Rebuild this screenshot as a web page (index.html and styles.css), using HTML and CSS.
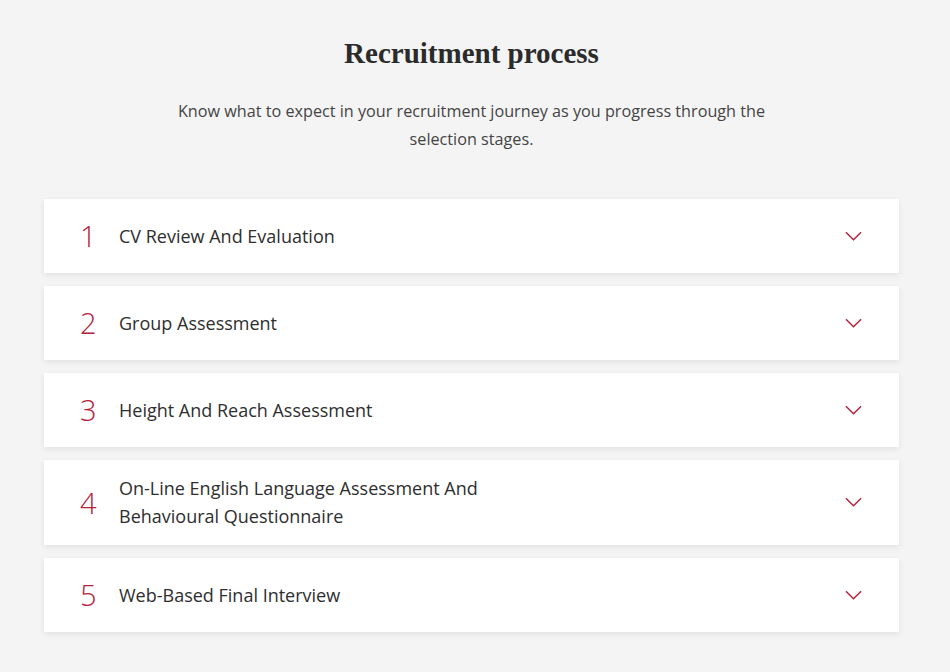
FILE: index.html
```html
<!DOCTYPE html>
<html lang="en">
<head>
  <meta charset="UTF-8" />
  <meta name="viewport" content="width=device-width, initial-scale=1.0"/>
  <title>Recruitment process</title>
  <link rel="stylesheet" href="styles.css">
</head>
<body>
  <section class="process">
    <h2>Recruitment process</h2>
    <p class="intro">Know what to expect in your recruitment journey as you progress through the selection stages.</p>

    <div class="steps">
      <div class="step">
        <span class="step-num">1</span>
        <div class="step-title"><span>CV Review And Evaluation</span></div>
        <svg class="chevron" viewBox="0 0 18 10" width="17" height="10"><path d="M1 1l8 8 8-8" /></svg>
      </div>
      <div class="step">
        <span class="step-num">2</span>
        <div class="step-title"><span>Group Assessment</span></div>
        <svg class="chevron" viewBox="0 0 18 10" width="17" height="10"><path d="M1 1l8 8 8-8" /></svg>
      </div>
      <div class="step">
        <span class="step-num">3</span>
        <div class="step-title"><span>Height And Reach Assessment</span></div>
        <svg class="chevron" viewBox="0 0 18 10" width="17" height="10"><path d="M1 1l8 8 8-8" /></svg>
      </div>
      <div class="step">
        <span class="step-num">4</span>
        <div class="step-title"><span>On-Line English Language Assessment And Behavioural Questionnaire</span></div>
        <svg class="chevron" viewBox="0 0 18 10" width="17" height="10"><path d="M1 1l8 8 8-8" /></svg>
      </div>
      <div class="step">
        <span class="step-num">5</span>
        <div class="step-title"><span>Web-Based Final Interview</span></div>
        <svg class="chevron" viewBox="0 0 18 10" width="17" height="10"><path d="M1 1l8 8 8-8" /></svg>
      </div>
    </div>
  </section>
</body>
</html>
```

FILE: styles.css
```css
body {
  font-family: "Open Sans", "Liberation Sans", sans-serif;
  background-color: #f4f4f4;
  margin: 0;
  color: #333;
}

.process {
  padding: 34px 51px 40px 44px;
}

h2 {
  font-family: "Liberation Serif", serif;
  font-weight: bold;
  font-size: 29px;
  text-align: center;
  color: #2b2b2b;
  margin: 0;
  line-height: 38px;
}

.intro {
  max-width: 610px;
  margin: 25px auto 0 auto;
  text-align: center;
  font-size: 16.2px;
  line-height: 28px;
  color: #444;
  font-weight: 400;
}

.steps {
  margin-top: 46px;
  display: flex;
  flex-direction: column;
  gap: 13px;
}

.step {
  display: flex;
  align-items: center;
  min-height: 74px;
  box-sizing: border-box;
  padding: 14px 37px 15px 36px;
  background-color: #ffffff;
  box-shadow: 0 2px 6px rgba(0, 0, 0, 0.08);
}

.step-num {
  width: 39px;
  flex-shrink: 0;
  font-size: 29px;
  font-weight: 300;
  color: #b3223a;
  line-height: 1;
}

.step-title {
  flex: 1;
  font-size: 18px;
  line-height: 28px;
  font-weight: 400;
  color: #2e2e2e;
}

.step-title span {
  display: block;
  max-width: 380px;
}

.chevron {
  flex-shrink: 0;
  fill: none;
  stroke: #b3223a;
  stroke-width: 1.5;
}
```
